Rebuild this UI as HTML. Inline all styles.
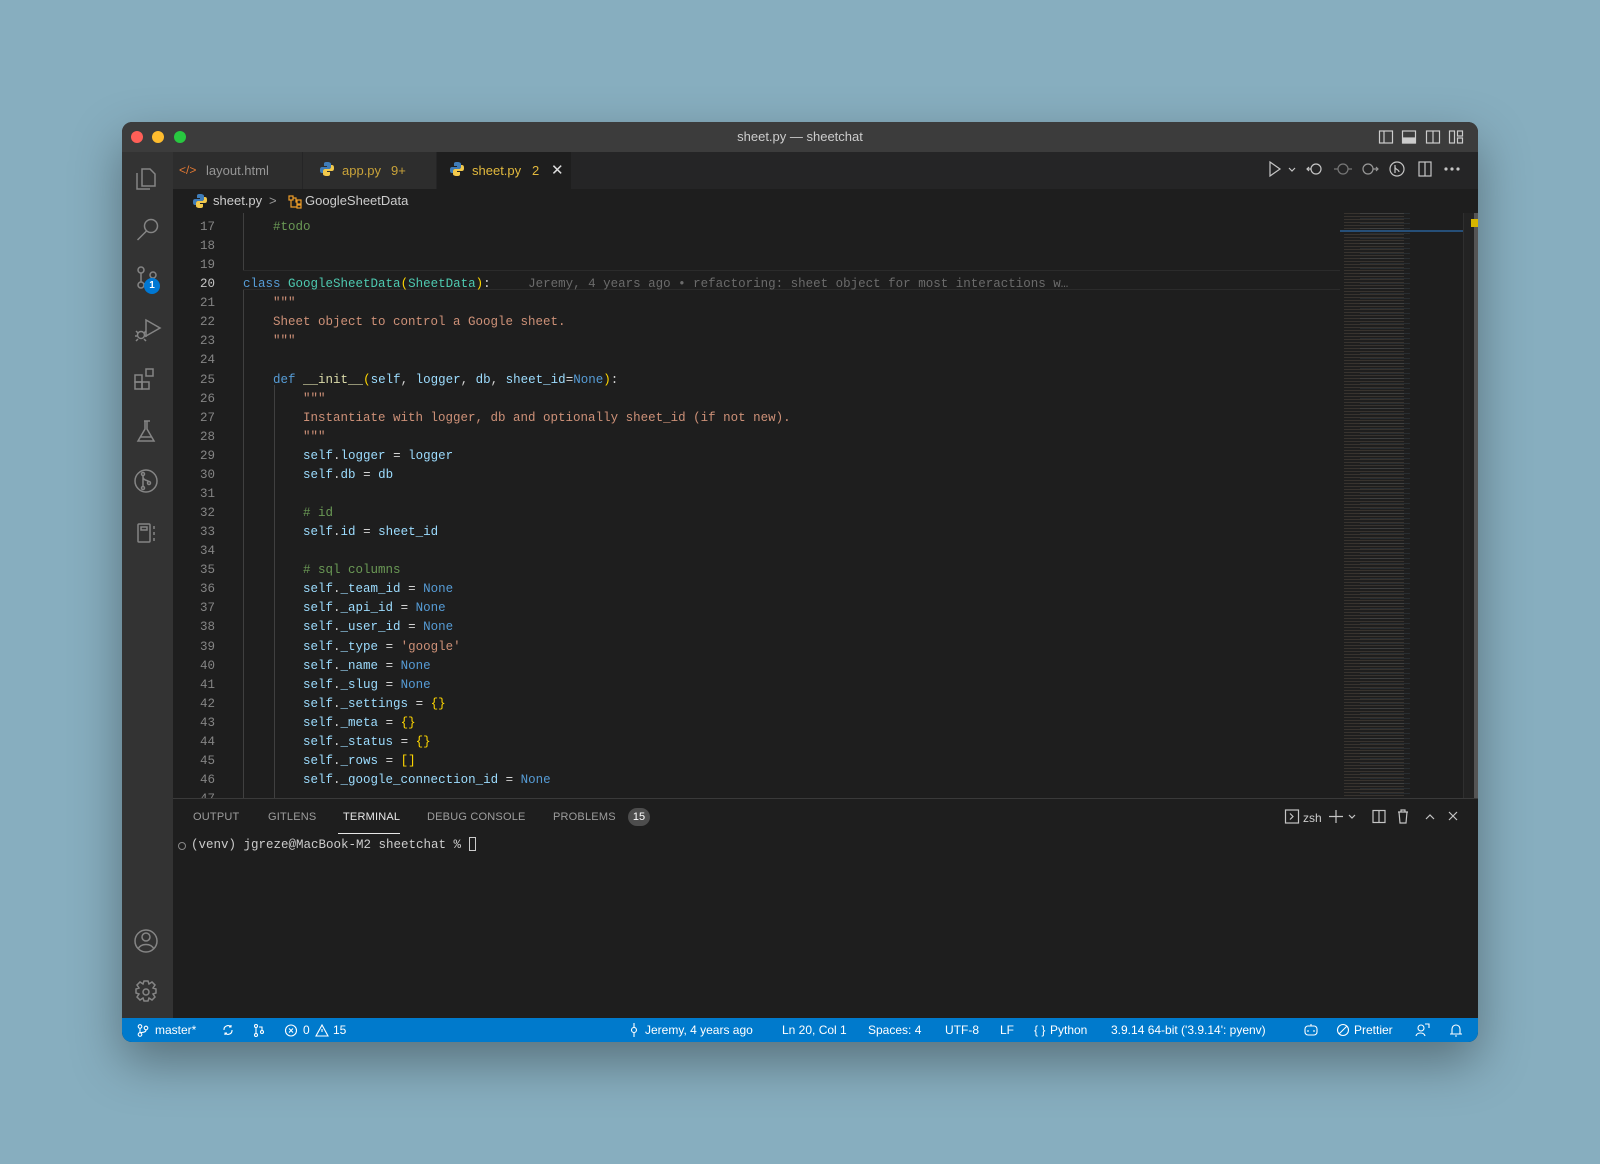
<!DOCTYPE html>
<html><head><meta charset="utf-8"><style>
*{margin:0;padding:0;box-sizing:border-box}
body{width:1600px;height:1164px;background:#87aebf;position:relative;overflow:hidden;font-family:"Liberation Sans",sans-serif}
.win{position:absolute;left:122px;top:122px;width:1356px;height:920px;border-radius:10px;overflow:hidden;background:#1e1e1e;box-shadow:0 20px 50px rgba(0,0,0,.35)}
.abs{position:absolute}
.title{left:0;top:0;width:1356px;height:30px;background:#3c3c3c;color:#ccc;font-size:13px;text-align:center;line-height:30px}
.tl{width:12px;height:12px;border-radius:50%;top:9px}
.act{left:0;top:30px;width:51px;height:866px;background:#333}
.tabs{left:51px;top:30px;width:1305px;height:37px;background:#252526}
.tab{top:0;height:37px;line-height:37px;font-size:13px}
.bc{left:51px;top:67px;width:1305px;height:24px;background:#1e1e1e;font-size:13px;color:#ccc;line-height:24px}
.code{left:51px;top:91px;width:1167px;height:585px;overflow:hidden}
.ln{position:absolute;left:0;width:42px;text-align:right;font-family:"Liberation Mono",monospace;font-size:12.5px;color:#858585}
.cl{position:absolute;left:70px;white-space:pre;font-family:"Liberation Mono",monospace;font-size:12.5px;color:#d4d4d4}
.k{color:#569cd6}.c{color:#4ec9b0}.p{color:#ffd700}.s{color:#ce9178}.m{color:#6a9955}.v{color:#9cdcfe}.f{color:#dcdcaa}
.guide{position:absolute;width:1px;background:#404040}
.panel{left:51px;top:676px;width:1305px;height:220px;background:#1e1e1e;border-top:1px solid #3a3a3a}
.pt{top:12px;font-size:11px;color:#9d9d9d;letter-spacing:.2px}
.status{left:0;top:896px;width:1356px;height:24px;background:#007acc;color:#fff;font-size:12px;line-height:24px}
.status span{position:absolute;top:0;white-space:nowrap}
svg{position:absolute;overflow:visible}
</style></head><body>
<div class="win">
 <div class="abs title">sheet.py — sheetchat</div>
 <div class="abs tl" style="left:9px;background:#ff5f57"></div>
 <div class="abs tl" style="left:30px;background:#febc2e"></div>
 <div class="abs tl" style="left:52px;background:#28c840"></div>
 <svg style="left:1257px;top:8px" width="90" height="16" fill="none" stroke="#ccc" stroke-width="1.2">
  <rect x="0.5" y="1" width="13" height="12"/><line x1="5" y1="1" x2="5" y2="13"/>
  <rect x="23.5" y="1" width="13" height="12"/><rect x="24" y="8" width="12" height="5" fill="#ccc"/>
  <rect x="47.5" y="1" width="13" height="12"/><line x1="54" y1="1" x2="54" y2="13"/>
  <rect x="70.5" y="1" width="5" height="12"/><rect x="78.5" y="1" width="5" height="5"/><rect x="78.5" y="8" width="5" height="5"/>
 </svg>

 <div class="abs act"></div>
 <svg style="left:0;top:30px" width="51" height="866" fill="none" stroke="#858585" stroke-width="1.5">
  <path d="M20 17h8l5 5v12h-13z M15 21v16h13"/>
  <g transform="translate(0,5)"><circle cx="29" cy="69" r="6.5"/><path d="M24.5 74l-9 9"/></g>
  <g transform="translate(0,6)"><circle cx="19" cy="112" r="3"/><circle cx="31" cy="117" r="3"/><circle cx="19" cy="127" r="3"/><path d="M19 115v9 M31 120c0 4-6 5-9 6"/></g>
  <g transform="translate(0,6)"><path d="M24 162l14 8-14 8z"/><circle cx="19" cy="177" r="3.5"/><path d="M14 173l2 2M24 173l-2 2M13 178h2M23 178h2M14 183l2-2M24 183l-2-2"/></g>
  <g transform="translate(0,11)"><rect x="13" y="212" width="7" height="7"/><rect x="20" y="219" width="7" height="7"/><rect x="13" y="219" width="7" height="7"/><rect x="24" y="206" width="7" height="7"/></g>
  <g transform="translate(0,15)"><path d="M22 254h6M23 254v8l-7 12h16l-7-12v-8 M18 270h12"/></g>
  <g transform="translate(0,25)"><circle cx="24" cy="304" r="11"/><circle cx="21" cy="297" r="1.5"/><circle cx="21" cy="311" r="1.5"/><circle cx="27" cy="306" r="1.5"/><path d="M21 298v12 M21 300c0 4 6 3 6 5"/></g>
  <g transform="translate(0,30)"><rect x="16" y="342" width="12" height="18" rx="1"/><rect x="19" y="345" width="6" height="3"/><path d="M32 344v3M32 350v3M32 356v3"/></g>
  <g transform="translate(0,18)"><circle cx="24" cy="771" r="11"/><circle cx="24" cy="767" r="4"/><path d="M16 779c3-6 13-6 16 0"/></g>
  <g transform="translate(0,19)"><circle cx="24" cy="821" r="3"/><path d="M22 810h4l1 3 3-2 3 3-2 3 3 1v4l-3 1 2 3-3 3-3-2-1 3h-4l-1-3-3 2-3-3 2-3-3-1v-4l3-1-2-3 3-3 3 2z"/></g>
 </svg>
 <div class="abs" style="left:22px;top:156px;width:16px;height:16px;border-radius:50%;background:#0078d4;color:#fff;font-size:10px;font-weight:bold;text-align:center;line-height:16px">1</div>

 <div class="abs tabs">
  <div class="abs tab" style="left:0;width:130px;background:#2d2d2d;color:#969696;border-right:1px solid #252526"><span style="position:absolute;left:6px;color:#e37933;font-size:12px">&lt;/&gt;</span><span style="position:absolute;left:33px">layout.html</span></div>
  <div class="abs tab" style="left:130px;width:134px;background:#2d2d2d;color:#c9a33a;border-right:1px solid #252526"><span style="position:absolute;left:39px">app.py</span><span style="position:absolute;left:88px">9+</span></div>
  <div class="abs tab" style="left:264px;width:134px;background:#1e1e1e;color:#e2b93d"><span style="position:absolute;left:35px">sheet.py</span><span style="position:absolute;left:95px">2</span><span style="position:absolute;left:114px;color:#ddd;font-size:15px">✕</span></div>
 </div>
 <svg width="14" height="14" style="left:198px;top:40px" viewBox="0 0 14 14"><path d="M7 0c-3 0-3 1-3 2v2h3v1H2C0 5 0 7 0 8s0 3 2 3h1V9c0-1 1-2 2-2h4c1 0 2-1 2-2V2c0-1-1-2-4-2z" fill="#3f7cb8"/><path d="M7 14c3 0 3-1 3-2v-2H7V9h5c2 0 2-2 2-3s0-3-2-3h-1v2c0 1-1 2-2 2H5c-1 0-2 1-2 2v3c0 1 1 2 4 2z" fill="#f2c94c"/></svg>
 <svg width="14" height="14" style="left:328px;top:40px" viewBox="0 0 14 14"><path d="M7 0c-3 0-3 1-3 2v2h3v1H2C0 5 0 7 0 8s0 3 2 3h1V9c0-1 1-2 2-2h4c1 0 2-1 2-2V2c0-1-1-2-4-2z" fill="#3f7cb8"/><path d="M7 14c3 0 3-1 3-2v-2H7V9h5c2 0 2-2 2-3s0-3-2-3h-1v2c0 1-1 2-2 2H5c-1 0-2 1-2 2v3c0 1 1 2 4 2z" fill="#f2c94c"/></svg>
 <svg style="left:1144px;top:38px" width="230" height="18" fill="none" stroke="#c5c5c5" stroke-width="1.2">
  <path d="M4 2l10 7-10 7z"/><path d="M23 8l3 3 3-3"/>
  <circle cx="50" cy="9" r="5"/><path d="M45 9h-4M43 7l-2 2 2 2"/>
  <circle cx="77" cy="9" r="5" stroke="#777"/><path d="M72 9h-4M82 9h4" stroke="#777"/>
  <circle cx="102" cy="9" r="5" stroke="#999"/><path d="M107 9h5M110 7l2 2-2 2" stroke="#999"/>
  <circle cx="131" cy="9" r="7"/><path d="M129 5v8M129 7c0 3 4 2 4 5"/>
  <rect x="153" y="2" width="12" height="14"/><line x1="159" y1="2" x2="159" y2="16"/>
  <circle cx="180" cy="9" r="1" fill="#c5c5c5"/><circle cx="186" cy="9" r="1" fill="#c5c5c5"/><circle cx="192" cy="9" r="1" fill="#c5c5c5"/>
 </svg>

 <div class="abs bc"><span style="position:absolute;left:40px">sheet.py</span><span style="position:absolute;left:96px;color:#999">&gt;</span><span style="position:absolute;left:132px">GoogleSheetData</span></div>
 <svg width="14" height="14" style="left:71px;top:72px" viewBox="0 0 14 14"><path d="M7 0c-3 0-3 1-3 2v2h3v1H2C0 5 0 7 0 8s0 3 2 3h1V9c0-1 1-2 2-2h4c1 0 2-1 2-2V2c0-1-1-2-4-2z" fill="#3f7cb8"/><path d="M7 14c3 0 3-1 3-2v-2H7V9h5c2 0 2-2 2-3s0-3-2-3h-1v2c0 1-1 2-2 2H5c-1 0-2 1-2 2v3c0 1 1 2 4 2z" fill="#f2c94c"/></svg>
 <svg width="14" height="14" style="left:166px;top:73px" fill="none" stroke="#ee9d28" stroke-width="1.2"><rect x="1" y="1" width="4" height="4"/><rect x="9" y="5" width="4" height="4"/><rect x="9" y="10" width="4" height="3"/><path d="M3 5v7h6M5 3h3v4h1"/></svg>

 <div class="abs code">
  <div class="abs" style="left:70px;top:57px;width:1097px;height:20px;border-top:1px solid #2b2b2b;border-bottom:1px solid #2b2b2b"></div>
  <div class="guide" style="left:70px;top:0;height:57px"></div>
  <div class="guide" style="left:70px;top:77px;height:520px"></div>
  <div class="guide" style="left:101px;top:172px;height:420px"></div>
  <div id="lines"></div>
 </div>
 <div class="abs" style="left:1218px;top:91px;width:123px;height:585px;background:#1e1e1e;overflow:hidden">
  <div style="position:absolute;left:4px;top:0;width:60px;height:585px;background:repeating-linear-gradient(180deg,rgba(190,160,130,.16) 0 1px,transparent 1px 3px)"></div>
  <div style="position:absolute;left:20px;top:0;width:50px;height:585px;background:repeating-linear-gradient(180deg,rgba(130,180,220,.10) 0 1px,transparent 1px 5px)"></div>
  <div style="position:absolute;left:0;top:17px;width:123px;height:2px;background:#264f78"></div>
 </div>
 <div class="abs" style="left:1341px;top:91px;width:15px;height:585px;background:#232323;border-left:1px solid #2f2f2f"></div>
 <div class="abs" style="left:1352px;top:91px;width:4px;height:585px;background:#555"></div>
 <div class="abs" style="left:1349px;top:97px;width:7px;height:8px;background:#d7b600"></div>

 <div class="abs panel">
  <div class="abs pt" style="left:20px">OUTPUT</div>
  <div class="abs pt" style="left:95px">GITLENS</div>
  <div class="abs pt" style="left:170px;color:#e7e7e7">TERMINAL</div>
  <div class="abs" style="left:165px;top:34px;width:62px;height:1px;background:#e7e7e7"></div>
  <div class="abs pt" style="left:254px">DEBUG CONSOLE</div>
  <div class="abs pt" style="left:380px">PROBLEMS</div>
  <div class="abs" style="left:455px;top:9px;width:22px;height:18px;border-radius:9px;background:#4d4d4d;color:#fff;font-size:11px;text-align:center;line-height:18px">15</div>
  <div class="abs" style="left:5px;top:43px;width:8px;height:8px;border-radius:50%;border:1px solid #888"></div>
  <div class="abs" style="left:18px;top:38px;font-family:'Liberation Mono',monospace;font-size:12.5px;color:#ccc;white-space:pre">(venv) jgreze@MacBook-M2 sheetchat % <span style="display:inline-block;width:7px;height:14px;border:1px solid #ccc;vertical-align:-3px"></span></div>
  <div class="abs" style="left:1130px;top:12px;font-size:12px;color:#ccc">zsh</div>
  <svg style="left:1112px;top:10px" width="200" height="16" fill="none" stroke="#c5c5c5" stroke-width="1.2">
   <rect x="0.5" y="1" width="13" height="13"/><path d="M5 4.5l3 3-3 3"/>
   <path d="M51 1v13M44 7.5h14M64 6l3 3 3-3"/>
   <rect x="88" y="1.5" width="12" height="12"/><line x1="94" y1="1.5" x2="94" y2="13.5"/>
   <path d="M113 3h10M116 3V1h4v2M114 3l1 11h6l1-11"/>
   <path d="M141 10l4-4 4 4"/>
   <path d="M164 3l8 8M172 3l-8 8"/>
  </svg>
 </div>

 <div class="abs status">
  <svg style="left:15px;top:6px" width="12" height="13" fill="none" stroke="#fff" stroke-width="1.1"><circle cx="3" cy="2.5" r="1.8"/><circle cx="3" cy="10.5" r="1.8"/><circle cx="9" cy="4" r="1.8"/><path d="M3 4.5v4M9 6c0 3-5 2-6 3"/></svg>
  <span style="left:33px">master*</span>
  <svg style="left:100px;top:6px" width="12" height="12" fill="none" stroke="#fff" stroke-width="1.1"><path d="M2 6a4 4 0 0 1 7-3M10 6a4 4 0 0 1-7 3M9 1v2h-2M3 11V9h2"/></svg>
  <svg style="left:131px;top:6px" width="12" height="13" fill="none" stroke="#fff" stroke-width="1.1"><circle cx="3" cy="2" r="1.5"/><circle cx="3" cy="11" r="1.5"/><circle cx="9" cy="8" r="1.5"/><path d="M3 3.5v6M9 6.5V3H6"/></svg>
  <svg style="left:163px;top:6px" width="50" height="13" fill="none" stroke="#fff" stroke-width="1.1"><circle cx="6" cy="6.5" r="5.5"/><path d="M4 4.5l4 4M8 4.5l-4 4"/><path d="M37 1l6 11h-12z"/><path d="M37 5v3"/></svg>
  <span style="left:181px">0</span><span style="left:211px">15</span>
  <svg style="left:507px;top:5px" width="10" height="14" fill="none" stroke="#fff" stroke-width="1.1"><circle cx="5" cy="7" r="2.5"/><path d="M5 0v4.5M5 9.5V14"/></svg>
  <span style="left:523px">Jeremy, 4 years ago</span>
  <span style="left:660px">Ln 20, Col 1</span>
  <span style="left:746px">Spaces: 4</span>
  <span style="left:823px">UTF-8</span>
  <span style="left:878px">LF</span>
  <span style="left:912px">{ }</span>
  <span style="left:928px">Python</span>
  <span style="left:989px">3.9.14 64-bit ('3.9.14': pyenv)</span>
  <svg style="left:1182px;top:5px" width="14" height="14" fill="none" stroke="#fff" stroke-width="1.1"><rect x="1" y="3" width="12" height="9" rx="3"/><path d="M4 7v2M10 7v2M7 1v2"/></svg>
  <svg style="left:1214px;top:5px" width="14" height="14" fill="none" stroke="#fff" stroke-width="1.1"><circle cx="7" cy="7" r="5.5"/><path d="M3 11l8-8"/></svg>
  <span style="left:1232px">Prettier</span>
  <svg style="left:1294px;top:5px" width="14" height="14" fill="none" stroke="#fff" stroke-width="1.1"><circle cx="5" cy="5" r="3"/><path d="M0 13c1-4 8-4 9 0M9 1h4v4"/></svg>
  <svg style="left:1327px;top:5px" width="14" height="14" fill="none" stroke="#fff" stroke-width="1.1"><path d="M3 11V6a4 4 0 0 1 8 0v5zM1 11h12M6 13h2"/></svg>
 </div>
</div>
<script>
var L=[
[17,'    <span class="m">#todo</span>'],
[18,''],[19,''],
[20,'<span class="k">class</span> <span class="c">GoogleSheetData</span><span class="p">(</span><span class="c">SheetData</span><span class="p">)</span>:     <span style="color:#6b6b6b">Jeremy, 4 years ago • refactoring: sheet object for most interactions w…</span>'],
[21,'    <span class="s">"""</span>'],
[22,'    <span class="s">Sheet object to control a Google sheet.</span>'],
[23,'    <span class="s">"""</span>'],
[24,''],
[25,'    <span class="k">def</span> <span class="f">__init__</span><span class="p">(</span><span class="v">self</span>, <span class="v">logger</span>, <span class="v">db</span>, <span class="v">sheet_id</span>=<span class="k">None</span><span class="p">)</span>:'],
[26,'        <span class="s">"""</span>'],
[27,'        <span class="s">Instantiate with logger, db and optionally sheet_id (if not new).</span>'],
[28,'        <span class="s">"""</span>'],
[29,'        <span class="v">self</span>.<span class="v">logger</span> = <span class="v">logger</span>'],
[30,'        <span class="v">self</span>.<span class="v">db</span> = <span class="v">db</span>'],
[31,''],
[32,'        <span class="m"># id</span>'],
[33,'        <span class="v">self</span>.<span class="v">id</span> = <span class="v">sheet_id</span>'],
[34,''],
[35,'        <span class="m"># sql columns</span>'],
[36,'        <span class="v">self</span>.<span class="v">_team_id</span> = <span class="k">None</span>'],
[37,'        <span class="v">self</span>.<span class="v">_api_id</span> = <span class="k">None</span>'],
[38,'        <span class="v">self</span>.<span class="v">_user_id</span> = <span class="k">None</span>'],
[39,'        <span class="v">self</span>.<span class="v">_type</span> = <span class="s">\'google\'</span>'],
[40,'        <span class="v">self</span>.<span class="v">_name</span> = <span class="k">None</span>'],
[41,'        <span class="v">self</span>.<span class="v">_slug</span> = <span class="k">None</span>'],
[42,'        <span class="v">self</span>.<span class="v">_settings</span> = <span class="p">{}</span>'],
[43,'        <span class="v">self</span>.<span class="v">_meta</span> = <span class="p">{}</span>'],
[44,'        <span class="v">self</span>.<span class="v">_status</span> = <span class="p">{}</span>'],
[45,'        <span class="v">self</span>.<span class="v">_rows</span> = <span class="p">[]</span>'],
[46,'        <span class="v">self</span>.<span class="v">_google_connection_id</span> = <span class="k">None</span>'],
[47,'']];
var h='';
L.forEach(function(r,i){var t=(5+i*19.07).toFixed(2);
h+='<div class="ln" style="top:'+t+'px;line-height:19px;'+(r[0]==20?'color:#c6c6c6':'')+'">'+r[0]+'</div>';
h+='<div class="cl" style="top:'+t+'px;line-height:19px">'+r[1]+'</div>';});
document.getElementById('lines').innerHTML=h;
</script>
</body></html>
